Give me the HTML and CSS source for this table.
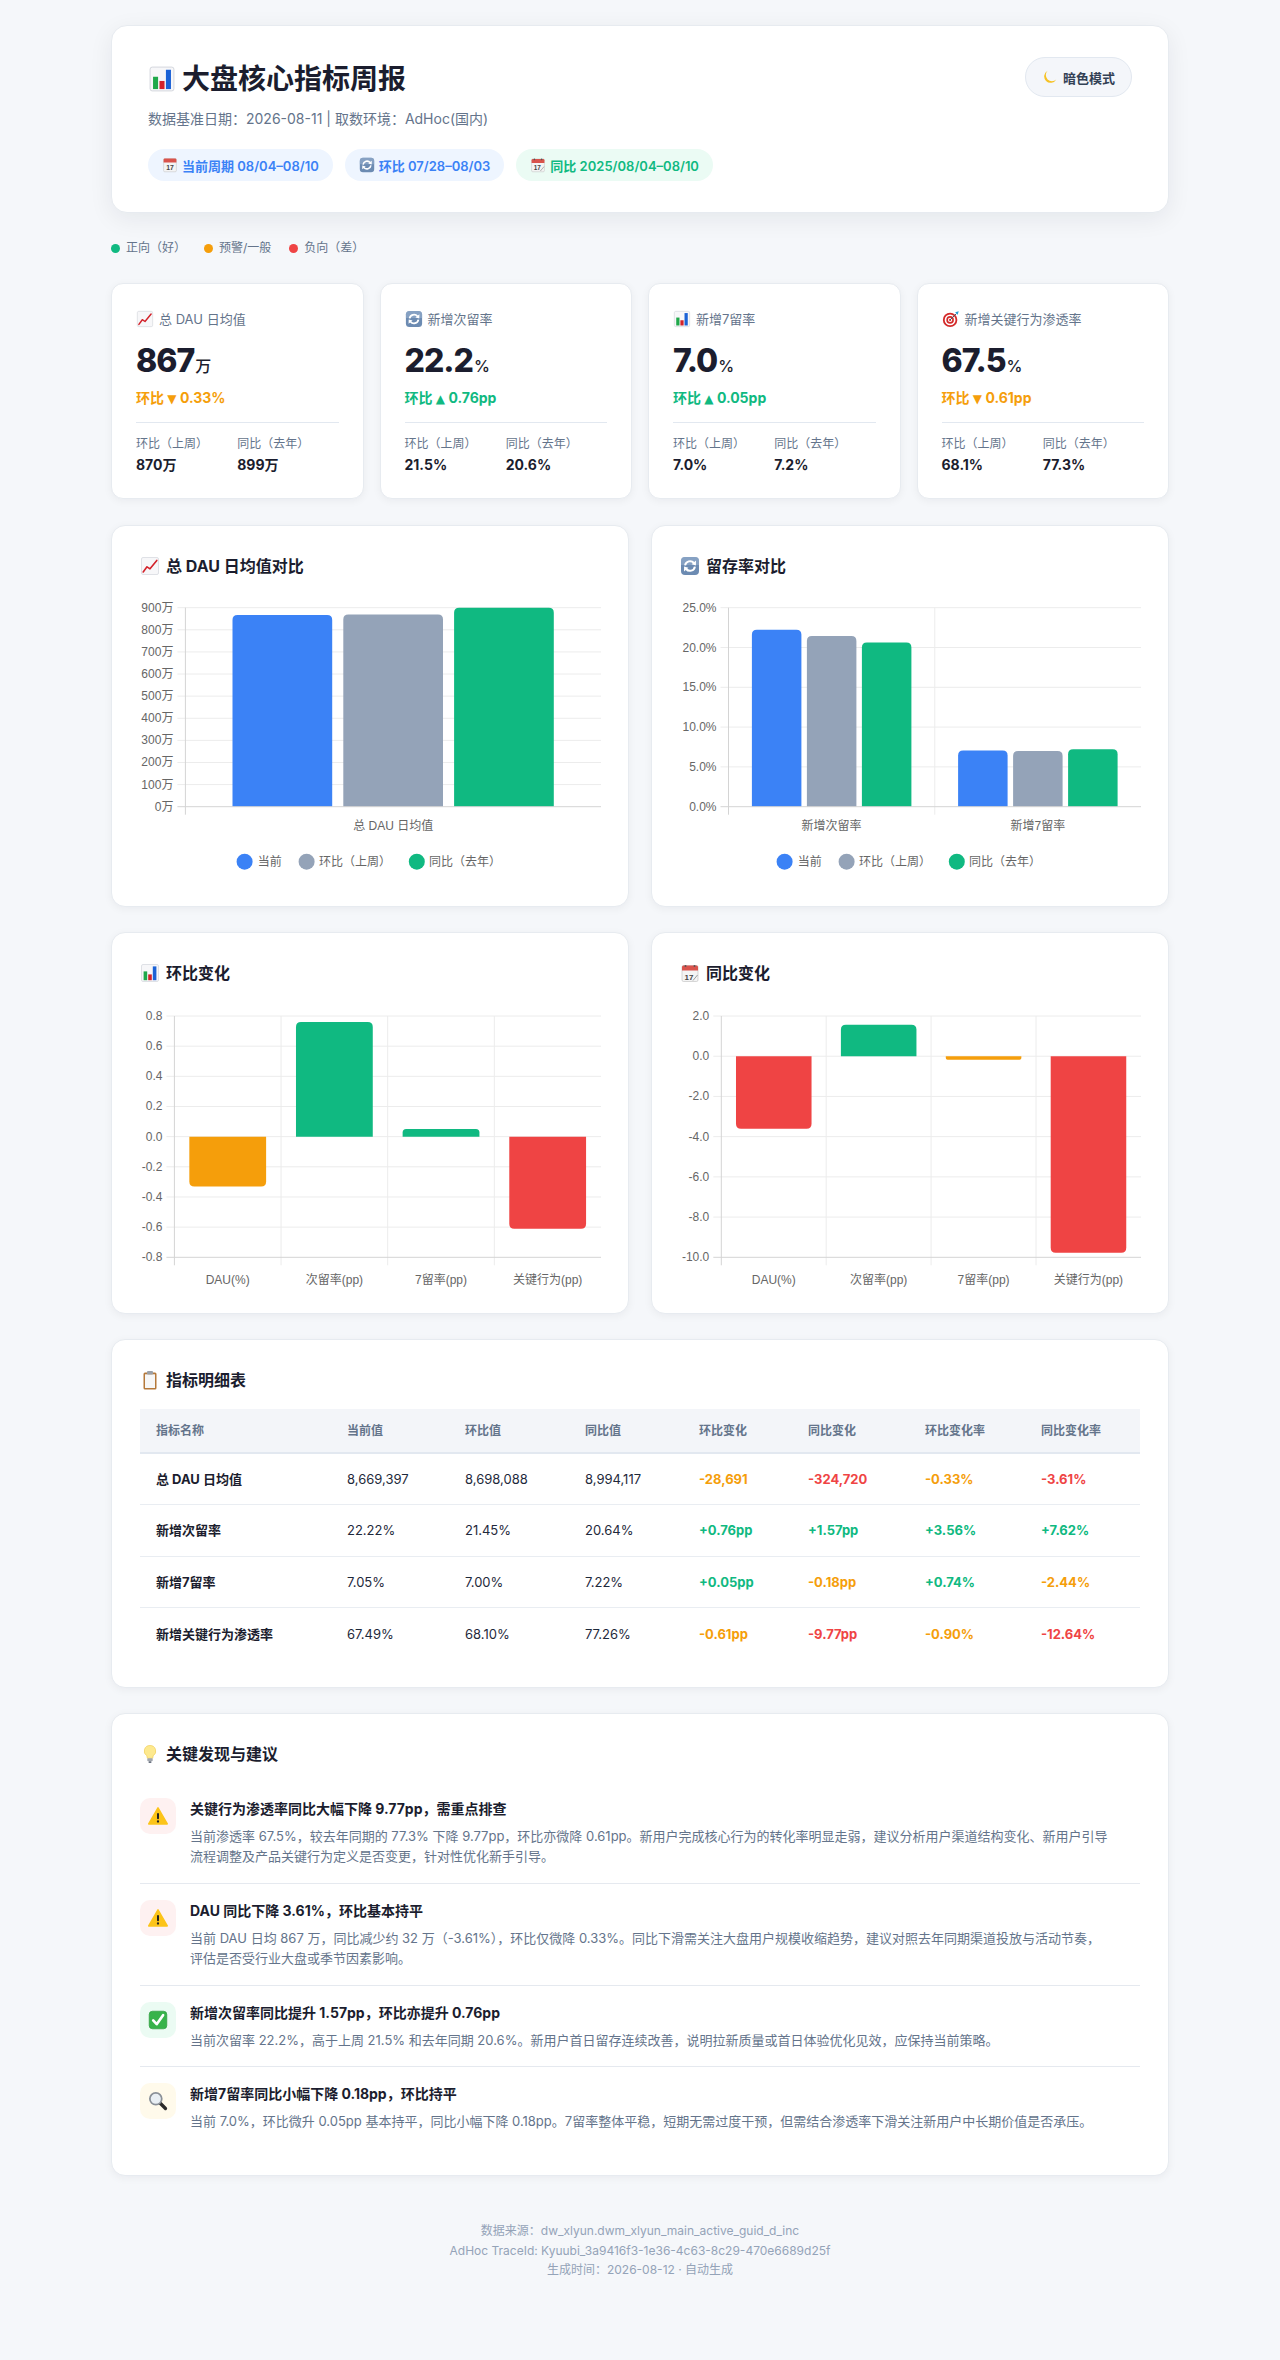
FILE: index.html
```html
<!DOCTYPE html>
<html lang="zh-CN">
<head>
<meta charset="utf-8">
<title>大盘核心指标周报</title>
<link rel="stylesheet" href="styles.css">
</head>
<body>
<svg class="defs" aria-hidden="true">
  <symbol id="i-bars" viewBox="0 0 20 20"><rect x="1.5" y="1.5" width="17" height="17" rx="1.5" fill="#f7f7f9" stroke="#d3d6dc" stroke-width=".7"/><rect x="3.6" y="8.4" width="3.6" height="8.8" fill="#1fa84a"/><rect x="8.2" y="11.4" width="3.6" height="5.8" fill="#d3222a"/><rect x="12.8" y="3.4" width="3.6" height="13.8" fill="#1b62d6"/></symbol>
  <symbol id="i-up" viewBox="0 0 20 20"><rect x="1.5" y="1.5" width="17" height="17" rx="1.5" fill="#f7f7f9" stroke="#d3d6dc" stroke-width=".7"/><path d="M3.2 16 L7 10.8 L10 12.8 L16.8 4.4" fill="none" stroke="#d3222a" stroke-width="1.6" stroke-linejoin="round" stroke-linecap="round"/></symbol>
  <symbol id="i-cycle" viewBox="0 0 20 20"><rect x="1" y="1" width="18" height="18" rx="4" fill="#6c8bb2"/><path d="M1 9 V5 A4 4 0 0 1 5 1 H15 A4 4 0 0 1 19 5 V9Z" fill="#9db4d1" opacity=".55"/><path d="M5.1 9.4 A5 5 0 0 1 13.9 7" fill="none" stroke="#fff" stroke-width="2"/><path d="M16 4.6 L15.9 9.4 L11.6 8.2Z" fill="#fff"/><path d="M14.9 10.6 A5 5 0 0 1 6.1 13" fill="none" stroke="#fff" stroke-width="2"/><path d="M4 15.4 L4.1 10.6 L8.4 11.8Z" fill="#fff"/></symbol>
  <symbol id="i-target" viewBox="0 0 20 20"><circle cx="9" cy="11" r="8" fill="#d42a2a"/><circle cx="9" cy="11" r="6" fill="#fff"/><circle cx="9" cy="11" r="4.2" fill="#d42a2a"/><circle cx="9" cy="11" r="2.4" fill="#fff"/><circle cx="9" cy="11" r="1.2" fill="#d42a2a"/><path d="M9 11 L16 4" stroke="#4b5563" stroke-width="1.1"/><path d="M14.6 2.6 L18.6 1.4 L17.4 5.4 L16.6 4.6 L15.4 3.4Z" fill="#23a0d6"/></symbol>
  <symbol id="i-moon" viewBox="0 0 20 20"><path d="M7 2.2 A8 8 0 1 0 17.8 13 A6.6 6.6 0 0 1 7 2.2Z" fill="#f6c225"/></symbol>
  <symbol id="i-clip" viewBox="0 0 20 20"><rect x="3.5" y="2.5" width="13" height="17" rx="1.5" fill="#b5793b"/><rect x="5" y="4.3" width="10" height="13.7" fill="#f7f7f7"/><rect x="7" y="1" width="6" height="3.6" rx="1" fill="#9aa0a8"/></symbol>
  <symbol id="i-bulb" viewBox="0 0 20 20"><path d="M10 1.5 A5.6 5.6 0 0 0 6.8 11.8 L7.3 14.3 H12.7 L13.2 11.8 A5.6 5.6 0 0 0 10 1.5Z" fill="#fde98f" stroke="#efc94c" stroke-width=".6"/><rect x="7.3" y="14.3" width="5.4" height="3" rx=".8" fill="#a3a8b0"/><rect x="8.5" y="17.3" width="3" height="1.6" rx=".7" fill="#6b7280"/></symbol>
  <symbol id="i-warn" viewBox="0 0 20 20"><path d="M10 2.6 L18.4 17.2 H1.6Z" fill="#fcc419" stroke="#fcc419" stroke-width="1.4" stroke-linejoin="round"/><rect x="9.1" y="7.2" width="1.8" height="5.8" rx=".9" fill="#222"/><circle cx="10" cy="15" r="1.05" fill="#222"/></symbol>
  <symbol id="i-check" viewBox="0 0 20 20"><rect x="2" y="2" width="16" height="16" rx="3" fill="#37b34a" stroke="#2a9a3c" stroke-width=".6"/><path d="M5.6 10.4 L8.8 13.8 L14.6 5.6" fill="none" stroke="#fff" stroke-width="2.4" stroke-linecap="round" stroke-linejoin="round"/></symbol>
  <symbol id="i-search" viewBox="0 0 20 20"><path d="M11.6 11.6 L16.8 16.8" stroke="#2b2b2b" stroke-width="3" stroke-linecap="round"/><circle cx="8" cy="8" r="5.4" fill="#e9eff4" stroke="#8a9098" stroke-width="1.6"/></symbol>
</svg>

<div class="page">
  <header class="card hero">
    <div class="hero-main">
      <h1 class="hero-title"><svg class="ic ic-title"><use href="#i-bars"/></svg>大盘核心指标周报</h1>
      <p class="hero-meta">数据基准日期：2026-08-11 | 取数环境：AdHoc(国内)</p>
      <div class="tags">
        <span class="tag tag-blue"><svg class="ic ic-tag" viewBox="0 0 20 20"><rect x="2" y="2" width="16" height="16.5" rx="1.5" fill="#f4f4f4" stroke="#bdbdbd" stroke-width=".6"/><path d="M2 7 V3.5 A1.5 1.5 0 0 1 3.5 2 H16.5 A1.5 1.5 0 0 1 18 3.5 V7Z" fill="#d9534c"/><text x="10" y="16.3" text-anchor="middle" font-size="8.5" font-family="Liberation Sans, sans-serif" fill="#444">17</text></svg>当前周期 08/04–08/10</span>
        <span class="tag tag-blue"><svg class="ic ic-tag"><use href="#i-cycle"/></svg>环比 07/28–08/03</span>
        <span class="tag tag-green"><svg class="ic ic-tag" viewBox="0 0 20 20"><rect x="2" y="2.5" width="16" height="16" rx="1.5" fill="#f4f4f4" stroke="#bdbdbd" stroke-width=".6"/><path d="M2 7.5 V4 A1.5 1.5 0 0 1 3.5 2.5 H16.5 A1.5 1.5 0 0 1 18 4 V7.5Z" fill="#d9534c"/><circle cx="5.5" cy="3" r="1" fill="#555"/><circle cx="14.5" cy="3" r="1" fill="#555"/><text x="9" y="16.5" text-anchor="middle" font-size="8" font-family="Liberation Sans, sans-serif" fill="#444">17</text><path d="M13 17.5 L17.5 12" stroke="#888" stroke-width=".8"/></svg>同比 2025/08/04–08/10</span>
      </div>
    </div>
    <button class="theme-btn" type="button"><svg class="ic ic-tag"><use href="#i-moon"/></svg>暗色模式</button>
  </header>

  <div class="legend">
    <span class="legend-item"><i class="dot dot-good"></i>正向（好）</span>
    <span class="legend-item"><i class="dot dot-warn"></i>预警/一般</span>
    <span class="legend-item"><i class="dot dot-bad"></i>负向（差）</span>
  </div>

  <div class="kpis">
    <div class="card kpi">
      <div class="kpi-label"><svg class="ic ic-kpi"><use href="#i-up"/></svg>总 DAU 日均值</div>
      <div class="kpi-value">867<span class="unit">万</span></div>
      <div class="kpi-change warn">环比 <span class="tri">▼</span> 0.33%</div>
      <div class="kpi-sub">
        <div><div class="sub-label">环比（上周）</div><div class="sub-val">870万</div></div>
        <div><div class="sub-label">同比（去年）</div><div class="sub-val">899万</div></div>
      </div>
    </div>
    <div class="card kpi">
      <div class="kpi-label"><svg class="ic ic-kpi"><use href="#i-cycle"/></svg>新增次留率</div>
      <div class="kpi-value">22.2<span class="unit">%</span></div>
      <div class="kpi-change good">环比 <span class="tri">▲</span> 0.76pp</div>
      <div class="kpi-sub">
        <div><div class="sub-label">环比（上周）</div><div class="sub-val">21.5%</div></div>
        <div><div class="sub-label">同比（去年）</div><div class="sub-val">20.6%</div></div>
      </div>
    </div>
    <div class="card kpi">
      <div class="kpi-label"><svg class="ic ic-kpi"><use href="#i-bars"/></svg>新增7留率</div>
      <div class="kpi-value">7.0<span class="unit">%</span></div>
      <div class="kpi-change good">环比 <span class="tri">▲</span> 0.05pp</div>
      <div class="kpi-sub">
        <div><div class="sub-label">环比（上周）</div><div class="sub-val">7.0%</div></div>
        <div><div class="sub-label">同比（去年）</div><div class="sub-val">7.2%</div></div>
      </div>
    </div>
    <div class="card kpi">
      <div class="kpi-label"><svg class="ic ic-kpi"><use href="#i-target"/></svg>新增关键行为渗透率</div>
      <div class="kpi-value">67.5<span class="unit">%</span></div>
      <div class="kpi-change warn">环比 <span class="tri">▼</span> 0.61pp</div>
      <div class="kpi-sub">
        <div><div class="sub-label">环比（上周）</div><div class="sub-val">68.1%</div></div>
        <div><div class="sub-label">同比（去年）</div><div class="sub-val">77.3%</div></div>
      </div>
    </div>
  </div>

  <div class="charts">
    <section class="card panel">
      <h3 class="panel-title"><svg class="ic ic-head"><use href="#i-up"/></svg>总 DAU 日均值对比</h3>
      <svg class="chart" viewBox="1 0 460 281">
        <g class="grid">
          <line x1="38.4" y1="10.7" x2="462" y2="10.7"/>
          <line x1="38.4" y1="32.81" x2="462" y2="32.81"/>
          <line x1="38.4" y1="54.92" x2="462" y2="54.92"/>
          <line x1="38.4" y1="77.03" x2="462" y2="77.03"/>
          <line x1="38.4" y1="99.14" x2="462" y2="99.14"/>
          <line x1="38.4" y1="121.26" x2="462" y2="121.26"/>
          <line x1="38.4" y1="143.37" x2="462" y2="143.37"/>
          <line x1="38.4" y1="165.48" x2="462" y2="165.48"/>
          <line x1="38.4" y1="187.59" x2="462" y2="187.59"/>
        </g>
        <g class="ax ax-end">
          <text x="34.4" y="14.7">900万</text>
          <text x="34.4" y="36.81">800万</text>
          <text x="34.4" y="58.92">700万</text>
          <text x="34.4" y="81.03">600万</text>
          <text x="34.4" y="103.14">500万</text>
          <text x="34.4" y="125.26">400万</text>
          <text x="34.4" y="147.37">300万</text>
          <text x="34.4" y="169.48">200万</text>
          <text x="34.4" y="191.59">100万</text>
          <text x="34.4" y="213.7">0万</text>
        </g>
        <path class="b-blue" d="M93.5 209.7 V23 Q93.5 18 98.5 18 H188.2 Q193.2 18 193.2 23 V209.7Z"/>
        <path class="b-gray" d="M204.3 209.7 V22.4 Q204.3 17.4 209.3 17.4 H299 Q304 17.4 304 22.4 V209.7Z"/>
        <path class="b-green" d="M315.1 209.7 V15.83 Q315.1 10.83 320.1 10.83 H409.8 Q414.8 10.83 414.8 15.83 V209.7Z"/>
        <line class="axis" x1="38.4" y1="209.7" x2="462" y2="209.7"/>
        <line class="axis" x1="46.4" y1="10.7" x2="46.4" y2="217.7"/>
        <text class="ax ax-mid" x="254.2" y="232.7">总 DAU 日均值</text>
        <g class="lg">
          <circle class="b-blue" cx="105.6" cy="264.7" r="8"/><text class="ax" x="118.7" y="268.9">当前</text>
          <circle class="b-gray" cx="167.6" cy="264.7" r="8"/><text class="ax" x="180" y="268.9">环比（上周）</text>
          <circle class="b-green" cx="277.8" cy="264.7" r="8"/><text class="ax" x="289.9" y="268.9">同比（去年）</text>
        </g>
      </svg>
    </section>

    <section class="card panel">
      <h3 class="panel-title"><svg class="ic ic-head"><use href="#i-cycle"/></svg>留存率对比</h3>
      <svg class="chart" viewBox="1 0 460 281">
        <g class="grid">
          <line x1="41.5" y1="10.7" x2="462" y2="10.7"/>
          <line x1="41.5" y1="50.5" x2="462" y2="50.5"/>
          <line x1="41.5" y1="90.3" x2="462" y2="90.3"/>
          <line x1="41.5" y1="130.1" x2="462" y2="130.1"/>
          <line x1="41.5" y1="169.9" x2="462" y2="169.9"/>
          <line x1="255.75" y1="10.7" x2="255.75" y2="217.7"/>
        </g>
        <g class="ax ax-end">
          <text x="37.5" y="14.7">25.0%</text>
          <text x="37.5" y="54.5">20.0%</text>
          <text x="37.5" y="94.3">15.0%</text>
          <text x="37.5" y="134.1">10.0%</text>
          <text x="37.5" y="173.9">5.0%</text>
          <text x="37.5" y="213.7">0.0%</text>
        </g>
        <path class="b-blue" d="M72.9 209.7 V37.83 Q72.9 32.83 77.9 32.83 H117.4 Q122.4 32.83 122.4 37.83 V209.7Z"/>
        <path class="b-gray" d="M127.9 209.7 V43.96 Q127.9 38.96 132.9 38.96 H172.4 Q177.4 38.96 177.4 43.96 V209.7Z"/>
        <path class="b-green" d="M182.9 209.7 V50.4 Q182.9 45.4 187.9 45.4 H227.4 Q232.4 45.4 232.4 50.4 V209.7Z"/>
        <path class="b-blue" d="M279.1 209.7 V158.58 Q279.1 153.58 284.1 153.58 H323.6 Q328.6 153.58 328.6 158.58 V209.7Z"/>
        <path class="b-gray" d="M334.1 209.7 V158.98 Q334.1 153.98 339.1 153.98 H378.6 Q383.6 153.98 383.6 158.98 V209.7Z"/>
        <path class="b-green" d="M389.1 209.7 V157.23 Q389.1 152.23 394.1 152.23 H433.6 Q438.6 152.23 438.6 157.23 V209.7Z"/>
        <line class="axis" x1="41.5" y1="209.7" x2="462" y2="209.7"/>
        <line class="axis" x1="49.5" y1="10.7" x2="49.5" y2="217.7"/>
        <text class="ax ax-mid" x="152.6" y="232.7">新增次留率</text>
        <text class="ax ax-mid" x="358.9" y="232.7">新增7留率</text>
        <g class="lg">
          <circle class="b-blue" cx="105.6" cy="264.7" r="8"/><text class="ax" x="118.7" y="268.9">当前</text>
          <circle class="b-gray" cx="167.6" cy="264.7" r="8"/><text class="ax" x="180" y="268.9">环比（上周）</text>
          <circle class="b-green" cx="277.8" cy="264.7" r="8"/><text class="ax" x="289.9" y="268.9">同比（去年）</text>
        </g>
      </svg>
    </section>
  </div>

  <div class="charts">
    <section class="card panel">
      <h3 class="panel-title"><svg class="ic ic-head"><use href="#i-bars"/></svg>环比变化</h3>
      <svg class="chart" viewBox="1 0 460 281">
        <g class="grid">
          <line x1="27.4" y1="12" x2="462" y2="12"/>
          <line x1="27.4" y1="42.16" x2="462" y2="42.16"/>
          <line x1="27.4" y1="72.33" x2="462" y2="72.33"/>
          <line x1="27.4" y1="102.49" x2="462" y2="102.49"/>
          <line x1="27.4" y1="132.65" x2="462" y2="132.65"/>
          <line x1="27.4" y1="162.81" x2="462" y2="162.81"/>
          <line x1="27.4" y1="192.98" x2="462" y2="192.98"/>
          <line x1="27.4" y1="223.14" x2="462" y2="223.14"/>
          <line x1="142.05" y1="12" x2="142.05" y2="261.3"/>
          <line x1="248.7" y1="12" x2="248.7" y2="261.3"/>
          <line x1="355.35" y1="12" x2="355.35" y2="261.3"/>
        </g>
        <g class="ax ax-end">
          <text x="23.4" y="16">0.8</text>
          <text x="23.4" y="46.16">0.6</text>
          <text x="23.4" y="76.33">0.4</text>
          <text x="23.4" y="106.49">0.2</text>
          <text x="23.4" y="136.65">0.0</text>
          <text x="23.4" y="166.81">-0.2</text>
          <text x="23.4" y="196.98">-0.4</text>
          <text x="23.4" y="227.14">-0.6</text>
          <text x="23.4" y="257.3">-0.8</text>
        </g>
        <path class="b-orange" d="M50.33 132.65 V177.41 Q50.33 182.41 55.33 182.41 H122.12 Q127.12 182.41 127.12 177.41 V132.65Z"/>
        <path class="b-green" d="M156.98 132.65 V23.05 Q156.98 18.05 161.98 18.05 H228.77 Q233.77 18.05 233.77 23.05 V132.65Z"/>
        <path class="b-green" d="M263.63 132.65 V128.61 Q263.63 125.11 267.13 125.11 H336.92 Q340.42 125.11 340.42 128.61 V132.65Z"/>
        <path class="b-red" d="M370.28 132.65 V219.64 Q370.28 224.64 375.28 224.64 H442.07 Q447.07 224.64 447.07 219.64 V132.65Z"/>
        <line class="axis" x1="27.4" y1="253.3" x2="462" y2="253.3"/>
        <line class="axis" x1="35.4" y1="12" x2="35.4" y2="261.3"/>
        <g class="ax ax-mid">
          <text x="88.7" y="280">DAU(%)</text>
          <text x="195.4" y="280">次留率(pp)</text>
          <text x="302" y="280">7留率(pp)</text>
          <text x="408.7" y="280">关键行为(pp)</text>
        </g>
      </svg>
    </section>

    <section class="card panel">
      <h3 class="panel-title"><svg class="ic ic-head" viewBox="0 0 20 20"><rect x="2" y="2.5" width="16" height="16" rx="1.5" fill="#f4f4f4" stroke="#bdbdbd" stroke-width=".6"/><path d="M2 7.5 V4 A1.5 1.5 0 0 1 3.5 2.5 H16.5 A1.5 1.5 0 0 1 18 4 V7.5Z" fill="#d9534c"/><circle cx="5.5" cy="3" r="1" fill="#555"/><circle cx="14.5" cy="3" r="1" fill="#555"/><text x="9" y="16.5" text-anchor="middle" font-size="8" font-family="Liberation Sans, sans-serif" fill="#444">17</text><path d="M13 17.5 L17.5 12" stroke="#888" stroke-width=".8"/></svg>同比变化</h3>
      <svg class="chart" viewBox="1 0 460 281">
        <g class="grid">
          <line x1="34.3" y1="12" x2="462" y2="12"/>
          <line x1="34.3" y1="52.22" x2="462" y2="52.22"/>
          <line x1="34.3" y1="92.43" x2="462" y2="92.43"/>
          <line x1="34.3" y1="132.65" x2="462" y2="132.65"/>
          <line x1="34.3" y1="172.87" x2="462" y2="172.87"/>
          <line x1="34.3" y1="213.08" x2="462" y2="213.08"/>
          <line x1="147.2" y1="12" x2="147.2" y2="261.3"/>
          <line x1="252.1" y1="12" x2="252.1" y2="261.3"/>
          <line x1="357" y1="12" x2="357" y2="261.3"/>
        </g>
        <g class="ax ax-end">
          <text x="30.3" y="16">2.0</text>
          <text x="30.3" y="56.22">0.0</text>
          <text x="30.3" y="96.43">-2.0</text>
          <text x="30.3" y="136.65">-4.0</text>
          <text x="30.3" y="176.87">-6.0</text>
          <text x="30.3" y="217.08">-8.0</text>
          <text x="30.3" y="257.3">-10.0</text>
        </g>
        <path class="b-red" d="M56.99 52.2 V119.8 Q56.99 124.8 61.99 124.8 H127.54 Q132.54 124.8 132.54 119.8 V52.2Z"/>
        <path class="b-green" d="M161.9 52.2 V25.63 Q161.9 20.63 166.9 20.63 H232.45 Q237.45 20.63 237.45 25.63 V52.2Z"/>
        <path class="b-orange" d="M266.8 52.2 V54.02 Q266.8 55.82 268.6 55.82 H340.55 Q342.35 55.82 342.35 54.02 V52.2Z"/>
        <path class="b-red" d="M371.7 52.2 V243.65 Q371.7 248.65 376.7 248.65 H442.25 Q447.25 248.65 447.25 243.65 V52.2Z"/>
        <line class="axis" x1="34.3" y1="253.3" x2="462" y2="253.3"/>
        <line class="axis" x1="42.3" y1="12" x2="42.3" y2="261.3"/>
        <g class="ax ax-mid">
          <text x="94.75" y="280">DAU(%)</text>
          <text x="199.65" y="280">次留率(pp)</text>
          <text x="304.55" y="280">7留率(pp)</text>
          <text x="409.45" y="280">关键行为(pp)</text>
        </g>
      </svg>
    </section>
  </div>

  <section class="card panel table-panel">
    <h3 class="panel-title panel-title-tight"><svg class="ic ic-head"><use href="#i-clip"/></svg>指标明细表</h3>
    <table class="metrics">
      <colgroup>
        <col class="c1"><col class="c2"><col class="c3"><col class="c4"><col class="c5"><col class="c6"><col class="c7"><col class="c8">
      </colgroup>
      <thead>
        <tr><th>指标名称</th><th>当前值</th><th>环比值</th><th>同比值</th><th>环比变化</th><th>同比变化</th><th>环比变化率</th><th>同比变化率</th></tr>
      </thead>
      <tbody>
        <tr><td class="name">总 DAU 日均值</td><td>8,669,397</td><td>8,698,088</td><td>8,994,117</td><td class="warn b">-28,691</td><td class="bad b">-324,720</td><td class="warn b">-0.33%</td><td class="bad b">-3.61%</td></tr>
        <tr><td class="name">新增次留率</td><td>22.22%</td><td>21.45%</td><td>20.64%</td><td class="good b">+0.76pp</td><td class="good b">+1.57pp</td><td class="good b">+3.56%</td><td class="good b">+7.62%</td></tr>
        <tr><td class="name">新增7留率</td><td>7.05%</td><td>7.00%</td><td>7.22%</td><td class="good b">+0.05pp</td><td class="warn b">-0.18pp</td><td class="good b">+0.74%</td><td class="warn b">-2.44%</td></tr>
        <tr><td class="name">新增关键行为渗透率</td><td>67.49%</td><td>68.10%</td><td>77.26%</td><td class="warn b">-0.61pp</td><td class="bad b">-9.77pp</td><td class="warn b">-0.90%</td><td class="bad b">-12.64%</td></tr>
      </tbody>
    </table>
  </section>

  <section class="card panel findings">
    <h3 class="panel-title findings-title"><svg class="ic ic-head"><use href="#i-bulb"/></svg>关键发现与建议</h3>
    <div class="finding">
      <div class="f-icon f-red"><svg class="ic ic-find"><use href="#i-warn"/></svg></div>
      <div class="f-body">
        <div class="f-title">关键行为渗透率同比大幅下降 9.77pp，需重点排查</div>
        <div class="f-desc">当前渗透率 67.5%，较去年同期的 77.3% 下降 9.77pp，环比亦微降 0.61pp。新用户完成核心行为的转化率明显走弱，建议分析用户渠道结构变化、新用户引导流程调整及产品关键行为定义是否变更，针对性优化新手引导。</div>
      </div>
    </div>
    <div class="finding">
      <div class="f-icon f-red"><svg class="ic ic-find"><use href="#i-warn"/></svg></div>
      <div class="f-body">
        <div class="f-title">DAU 同比下降 3.61%，环比基本持平</div>
        <div class="f-desc">当前 DAU 日均 867 万，同比减少约 32 万（-3.61%），环比仅微降 0.33%。同比下滑需关注大盘用户规模收缩趋势，建议对照去年同期渠道投放与活动节奏，评估是否受行业大盘或季节因素影响。</div>
      </div>
    </div>
    <div class="finding">
      <div class="f-icon f-green"><svg class="ic ic-find"><use href="#i-check"/></svg></div>
      <div class="f-body">
        <div class="f-title">新增次留率同比提升 1.57pp，环比亦提升 0.76pp</div>
        <div class="f-desc">当前次留率 22.2%，高于上周 21.5% 和去年同期 20.6%。新用户首日留存连续改善，说明拉新质量或首日体验优化见效，应保持当前策略。</div>
      </div>
    </div>
    <div class="finding">
      <div class="f-icon f-yellow"><svg class="ic ic-find"><use href="#i-search"/></svg></div>
      <div class="f-body">
        <div class="f-title">新增7留率同比小幅下降 0.18pp，环比持平</div>
        <div class="f-desc">当前 7.0%，环比微升 0.05pp 基本持平，同比小幅下降 0.18pp。7留率整体平稳，短期无需过度干预，但需结合渗透率下滑关注新用户中长期价值是否承压。</div>
      </div>
    </div>
  </section>

  <footer class="footer">
    <div>数据来源：dw_xlyun.dwm_xlyun_main_active_guid_d_inc</div>
    <div>AdHoc TraceId: Kyuubi_3a9416f3-1e36-4c63-8c29-470e6689d25f</div>
    <div>生成时间：2026-08-12 · 自动生成</div>
  </footer>
</div>
</body>
</html>
```

FILE: styles.css
```css
* { box-sizing: border-box; }

html, body {
  margin: 0;
  background: #f5f7fa;
}

body {
  font-family: "Inter", "Noto Sans CJK SC", sans-serif;
  color: #1e293b;
}

.defs {
  position: absolute;
  width: 0;
  height: 0;
  overflow: hidden;
}

.page {
  width: 1058px;
  margin: 0 auto;
  padding: 25px 0 60px;
}

.card {
  background: #fff;
  border: 1px solid #e7ebf0;
}

.ic { display: inline-block; flex: none; }
.ic-title { width: 28px; height: 28px; margin-right: 6px; }
.ic-tag { width: 16px; height: 16px; }
.ic-kpi { width: 18px; height: 18px; }
.ic-head { width: 20px; height: 20px; }
.ic-find { width: 22px; height: 22px; }

/* hero */
.hero {
  display: flex;
  justify-content: space-between;
  align-items: flex-start;
  padding: 32px 36px 31px;
  border-radius: 16px;
  box-shadow: 0 6px 24px rgba(15, 23, 42, 0.07);
  margin-bottom: 24px;
}

.hero-title {
  display: flex;
  align-items: center;
  margin: 2px 0 0;
  height: 38px;
  font-size: 28px;
  line-height: 38px;
  font-weight: 700;
  color: #1b1d2e;
}

.hero-meta {
  margin: 11px 0 0;
  font-size: 14px;
  line-height: 20px;
  color: #64748b;
}

.tags {
  display: flex;
  gap: 12px;
  margin-top: 20px;
}

.tag {
  display: inline-flex;
  align-items: center;
  gap: 4px;
  height: 32px;
  padding: 0 14px;
  border-radius: 16px;
  font-size: 13px;
  font-weight: 600;
}

.tag-blue { background: #eef5ff; color: #3b82f6; }
.tag-green { background: #ebfbf4; color: #10b981; }

.theme-btn {
  display: inline-flex;
  align-items: center;
  gap: 5px;
  height: 40px;
  padding: 0 16px;
  margin-top: -1px;
  border: 1px solid #e2e8f0;
  border-radius: 20px;
  background: #f4f6fa;
  color: #334155;
  font: 600 13px "Inter", "Noto Sans CJK SC", sans-serif;
}

/* legend */
.legend {
  display: flex;
  gap: 18px;
  height: 22px;
  font-size: 12px;
  line-height: 22px;
  color: #64748b;
  margin-bottom: 24px;
}

.legend-item {
  display: inline-flex;
  align-items: center;
  gap: 6px;
}

.dot {
  width: 9px;
  height: 9px;
  border-radius: 50%;
}

.dot-good { background: #10b981; }
.dot-warn { background: #f59e0b; }
.dot-bad { background: #ef4444; }

/* KPI */
.kpis {
  display: grid;
  grid-template-columns: repeat(4, 1fr);
  gap: 16px;
  margin-bottom: 26px;
}

.kpi {
  height: 216px;
  border-radius: 12px;
  padding: 24px 24px 0;
  box-shadow: 0 2px 8px rgba(15, 23, 42, 0.05);
}

.kpi-label {
  display: flex;
  align-items: center;
  gap: 5px;
  height: 22px;
  font-size: 13px;
  line-height: 22px;
  color: #64748b;
}

.kpi-value {
  margin-top: 12px;
  height: 38px;
  font-size: 32px;
  line-height: 38px;
  font-weight: 800;
  letter-spacing: -1px;
  color: #1b1d2e;
}

.unit {
  font-size: 16px;
  line-height: 1;
  font-weight: 500;
  letter-spacing: 0;
  margin-left: 1px;
}

.kpi-change {
  margin-top: 8px;
  height: 20px;
  font-size: 14px;
  line-height: 20px;
  font-weight: 700;
}

.tri {
  font-family: "DejaVu Sans", sans-serif;
  font-size: 12px;
  line-height: 1;
}

.good { color: #10b981; }
.warn { color: #f59e0b; }
.bad { color: #ef4444; }

.kpi-sub {
  display: grid;
  grid-template-columns: 1fr 1fr;
  margin-top: 14px;
  padding-top: 12px;
  border-top: 1px solid #e2e8f0;
}

.sub-label {
  height: 18px;
  font-size: 12px;
  line-height: 18px;
  color: #64748b;
}

.sub-val {
  margin-top: 2px;
  height: 20px;
  font-size: 14px;
  line-height: 20px;
  font-weight: 700;
  color: #1b1d2e;
}

/* panels */
.charts {
  display: grid;
  grid-template-columns: 1fr 1fr;
  gap: 22px;
  margin-bottom: 25px;
}

.panel {
  border-radius: 14px;
  padding: 28px;
  box-shadow: 0 2px 8px rgba(15, 23, 42, 0.05);
}

.panel-title {
  display: flex;
  align-items: center;
  gap: 6px;
  height: 24px;
  margin: 0 0 19px;
  font-size: 16px;
  line-height: 24px;
  font-weight: 700;
  color: #1b1d2e;
}

.chart {
  display: block;
  width: 460px;
  height: 281px;
  overflow: visible;
}

.grid line {
  stroke: #ececec;
  stroke-width: 1;
}

.axis {
  stroke: #d4d4d4;
  stroke-width: 1;
}

.ax {
  font-family: "Liberation Sans", "Noto Sans CJK SC", sans-serif;
  font-size: 12px;
  fill: #666;
}

.ax-end text, text.ax-end { text-anchor: end; }
.ax-mid text, text.ax-mid { text-anchor: middle; }

.b-blue { fill: #3b82f6; }
.b-gray { fill: #94a3b8; }
.b-green { fill: #10b981; }
.b-orange { fill: #f59e0b; }
.b-red { fill: #ef4444; }

/* table */
.table-panel { margin-bottom: 25px; }

.panel-title-tight { margin-bottom: 17px; }

.metrics {
  width: 100%;
  border-collapse: collapse;
  table-layout: fixed;
  font-size: 13px;
}

.c1 { width: 191px; }
.c2 { width: 118px; }
.c3 { width: 120px; }
.c4 { width: 114px; }
.c5 { width: 109px; }
.c6 { width: 117px; }
.c7 { width: 116px; }
.c8 { width: 115px; }

.metrics th {
  height: 44px;
  text-align: left;
  padding: 0 16px;
  line-height: 18px;
  font-size: 12px;
  font-weight: 600;
  color: #64748b;
  background: #f3f5f9;
  border-bottom: 2px solid #e2e8f0;
  white-space: nowrap;
}

.metrics td {
  height: 51.5px;
  padding: 0 16px;
  line-height: 18px;
  color: #1e293b;
  border-bottom: 1px solid #e9edf2;
  white-space: nowrap;
}

.metrics tbody tr:last-child td { border-bottom: none; }

.metrics td.name { font-weight: 700; color: #1b1d2e; }
.metrics td.b { font-weight: 700; }
.metrics td.good { color: #10b981; }
.metrics td.warn { color: #f59e0b; }
.metrics td.bad { color: #ef4444; }

/* findings */
.findings-title { margin-bottom: 16px; }

.finding {
  display: flex;
  gap: 14px;
  padding: 16px 0;
  border-bottom: 1px solid #e5e9ef;
}

.finding:last-child {
  border-bottom: none;
}

.f-icon {
  flex: none;
  width: 36px;
  height: 36px;
  border-radius: 10px;
  display: flex;
  align-items: center;
  justify-content: center;
}

.f-red { background: #fef1f1; }
.f-green { background: #ebfbf3; }
.f-yellow { background: #fffaeb; }

.f-body { flex: 1; min-width: 0; }

.f-title {
  font-size: 14px;
  line-height: 22px;
  font-weight: 700;
  color: #1b1d2e;
  margin-bottom: 6px;
}

.f-desc {
  max-width: 918px;
  font-size: 13px;
  line-height: 20.4px;
  color: #64748b;
}

/* footer */
.footer {
  margin-top: 45px;
  text-align: center;
  font-size: 12px;
  line-height: 19.5px;
  color: #94a3b8;
}
```
